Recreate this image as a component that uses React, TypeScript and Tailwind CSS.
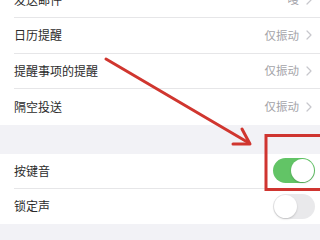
import React from 'react';

const font = { fontFamily: "'Noto Sans CJK SC', 'Noto Sans', sans-serif" };

function Chevron() {
    return (
        <svg width="6" height="10" viewBox="0 0 6 10" className="ml-[7px]">
            <path d="M1 1l4 4-4 4" fill="none" stroke="#c7c7cc" strokeWidth="1.2" strokeLinecap="round" strokeLinejoin="round" />
        </svg>
    );
}

function LinkRow({ label, value, last }: { label: string; value: string; last?: boolean }) {
    return (
        <div className="flex h-[35.5px] items-center pl-[14px]">
            <div className={`flex h-full flex-1 items-center pr-[8px] ${last ? '' : 'border-b border-[#e6e6e8]'}`}>
                <span className="flex-1 text-[12px] text-[#2b2b2b]">{label}</span>
                <span className="text-[11.5px] text-[#a3a3a8]">{value}</span>
                <Chevron />
            </div>
        </div>
    );
}

function Toggle({ on }: { on: boolean }) {
    return (
        <div className={`flex h-[25px] w-[42px] items-center rounded-full p-[1px] ${on ? 'justify-end bg-[#62c466]' : 'justify-start bg-[#e9e9eb]'}`}>
            <div className="h-[23px] w-[23px] rounded-full bg-white shadow-[0_1px_2px_rgba(0,0,0,0.18)]" />
        </div>
    );
}

function SwitchRow({ label, on, last }: { label: string; on: boolean; last?: boolean }) {
    return (
        <div className="flex h-[35px] items-center pl-[14px]">
            <div className={`flex h-full flex-1 items-center pr-[5px] ${last ? '' : 'border-b border-[#e6e6e8]'}`}>
                <span className="flex-1 text-[12px] text-[#2b2b2b]">{label}</span>
                <Toggle on={on} />
            </div>
        </div>
    );
}

export default function App() {
    return (
        <div className="relative h-[240px] w-[320px] overflow-hidden bg-[#f2f2f6]" style={font}>
            <div className="-mt-[17.5px] bg-white">
                <LinkRow label="发送邮件" value="嗖" />
                <LinkRow label="日历提醒" value="仅振动" />
                <LinkRow label="提醒事项的提醒" value="仅振动" />
                <LinkRow label="隔空投送" value="仅振动" last />
            </div>
            <div className="h-[29px]" />
            <div className="bg-white">
                <SwitchRow label="按键音" on />
                <SwitchRow label="锁定声" on={false} last />
            </div>

            {/* annotation overlay */}
            <svg className="pointer-events-none absolute inset-0" width="320" height="240" viewBox="0 0 320 240">
                <path d="M106 59L249 143" stroke="#d0362f" strokeWidth="3" strokeLinecap="round" />
                <path d="M242 129L250 144L233 144" fill="none" stroke="#d0362f" strokeWidth="3" strokeLinecap="round" strokeLinejoin="round" />
                <rect x="266" y="135.5" width="60" height="54" fill="none" stroke="#cf3530" strokeWidth="3" />
            </svg>
        </div>
    );
}
